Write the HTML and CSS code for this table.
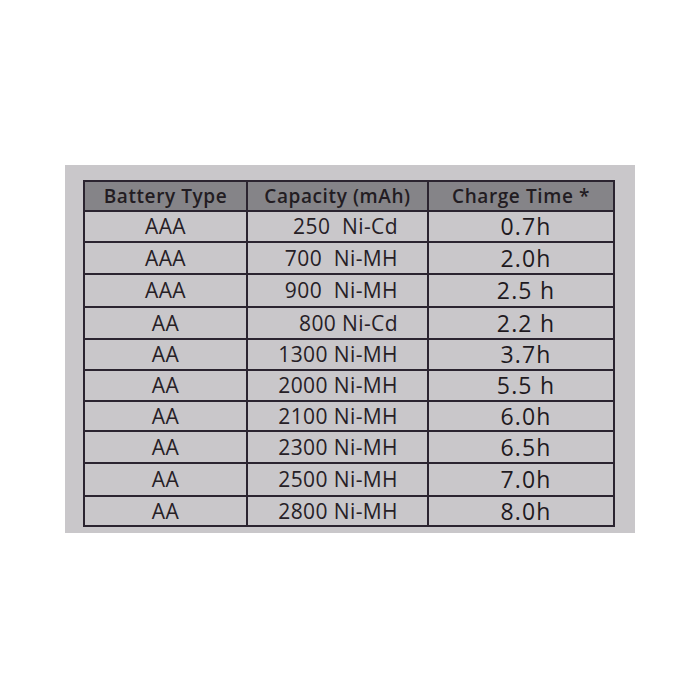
FILE: index.html
```html
<!DOCTYPE html>
<html>
<head>
<meta charset="utf-8">
<link rel="stylesheet" href="styles.css">
</head>
<body>
<div class="panel">
  <table class="spec">
    <colgroup><col class="c1"><col class="c2"><col class="c3"></colgroup>
    <thead>
      <tr class="r-head"><th>Battery Type</th><th>Capacity (mAh)</th><th>Charge Time *</th></tr>
    </thead>
    <tbody>
      <tr class="r31"><td class="type">AAA</td><td class="cap">250&nbsp; Ni-Cd</td><td class="time">0.7h</td></tr>
      <tr class="r32"><td class="type">AAA</td><td class="cap">700&nbsp; Ni-MH</td><td class="time">2.0h</td></tr>
      <tr class="r33"><td class="type">AAA</td><td class="cap">900&nbsp; Ni-MH</td><td class="time">2.5 h</td></tr>
      <tr class="r32"><td class="type">AA</td><td class="cap">800 Ni-Cd</td><td class="time">2.2 h</td></tr>
      <tr class="r31"><td class="type">AA</td><td class="cap">1300 Ni-MH</td><td class="time">3.7h</td></tr>
      <tr class="r31"><td class="type">AA</td><td class="cap">2000 Ni-MH</td><td class="time">5.5 h</td></tr>
      <tr class="r30"><td class="type">AA</td><td class="cap">2100 Ni-MH</td><td class="time">6.0h</td></tr>
      <tr class="r32"><td class="type">AA</td><td class="cap">2300 Ni-MH</td><td class="time">6.5h</td></tr>
      <tr class="r33"><td class="type">AA</td><td class="cap">2500 Ni-MH</td><td class="time">7.0h</td></tr>
      <tr class="r30"><td class="type">AA</td><td class="cap">2800 Ni-MH</td><td class="time">8.0h</td></tr>
    </tbody>
  </table>
</div>
</body>
</html>
```
FILE: styles.css
```css
html, body {
  margin: 0;
  padding: 0;
  background: #ffffff;
}
body {
  font-family: "Open Sans", "DejaVu Sans", sans-serif;
  color: #262026;
}
.panel {
  margin: 165px 0 0 65px;
  width: 570px;
  height: 368px;
  box-sizing: border-box;
  padding: 15px 0 0 18px;
  background: #c9c7ca;
}
.spec {
  border-collapse: collapse;
  width: 530px;
  table-layout: fixed;
  border: 2px solid #2b2430;
}
.c1 { width: 163px; }
.c2 { width: 181px; }
.c3 { width: 186px; }
.spec th, .spec td {
  border: 2px solid #2b2430;
  padding: 0;
  line-height: 1;
}
.spec th {
  background: #858488;
  font-weight: 600;
  font-size: 19px;
  letter-spacing: 0.6px;
  height: 28px;
  text-align: center;
  color: #221c22;
}
.spec td { font-size: 21px; letter-spacing: 0.4px; }
.type { text-align: center; }
.cap { text-align: right; padding-right: 29px !important; }
.time { text-align: center; font-size: 23px !important; letter-spacing: 1.2px !important; padding-left: 10px !important; color: #1f1a1f; }
.r30 td { height: 28px; }
.r31 td { height: 29px; }
.r32 td { height: 30px; }
.r33 td { height: 31px; }
```
